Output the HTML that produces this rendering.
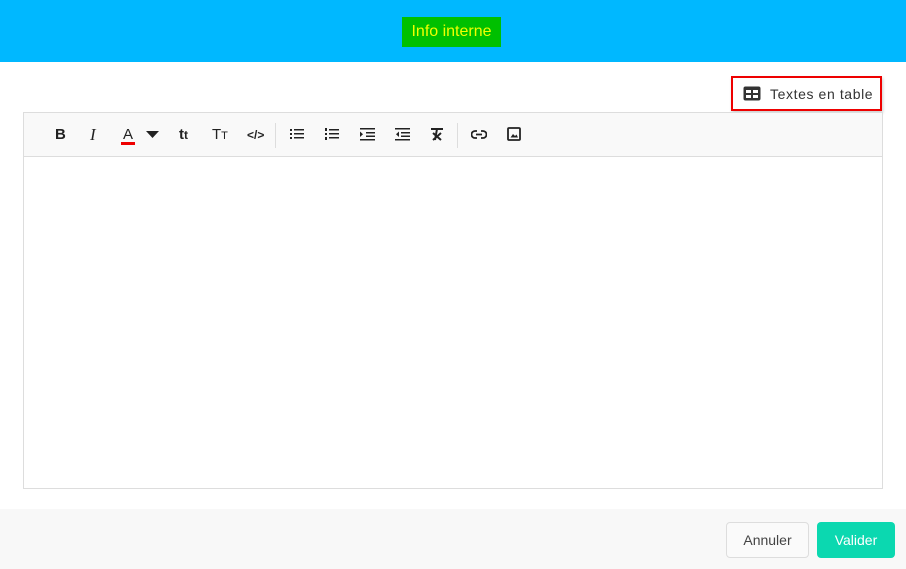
<!DOCTYPE html>
<html><head><meta charset="utf-8"><style>
*{box-sizing:border-box;margin:0;padding:0}
body{width:906px;height:569px;position:relative;background:#fff;font-family:"Liberation Sans",sans-serif;overflow:hidden}
.hdr{position:absolute;left:0;top:0;width:906px;height:62px;background:#00b8ff}
.title{position:absolute;left:402px;top:17px;width:99px;height:30px;background:#00c000;color:#f0ff00;font-size:16px;line-height:30px;text-align:center}
.tbtn{position:absolute;left:731px;top:76px;width:151px;height:35px;border:2px solid #e00;box-shadow:1px 2px 3px rgba(0,0,0,.2);font-size:14px;letter-spacing:0.6px;color:#333;line-height:33px;padding-left:37px;background:#fff}
.tbtn svg{position:absolute;left:10px;top:8px}
.ed{position:absolute;left:23px;top:112px;width:860px;height:377px;border:1px solid #ddd}
.tb{height:44px;background:#f9f9f9;border-bottom:1px solid #ddd;position:relative}
.tb .i{position:absolute;top:0;height:44px;line-height:44px;font-size:15px;color:#222;text-align:center}
.sep{position:absolute;top:10px;width:1px;height:25px;background:#ddd}
.ft{position:absolute;left:0;top:509px;width:906px;height:60px;background:#f8f8f8}
.b{position:absolute;top:522px;height:36px;border-radius:4px;font-size:14px;line-height:37px;text-align:center}
</style></head><body>
<div class="hdr"><div class="title">Info interne</div></div>
<div class="tbtn"><svg width="18" height="15" viewBox="0 0 18 15"><rect x="0.5" y="0.5" width="17" height="14" rx="2" fill="#333"/><rect x="3" y="4" width="5" height="3" fill="#fff"/><rect x="10" y="4" width="5" height="3" fill="#fff"/><rect x="3" y="9" width="5" height="3" fill="#fff"/><rect x="10" y="9" width="5" height="3" fill="#fff"/></svg>Textes en table</div>
<div class="ed"><div class="tb">
<div class="i" style="left:31px;font-weight:bold">B</div>
<div class="i" style="left:66px;font-style:italic;font-family:'Liberation Serif',serif;font-size:17px">I</div>
<div class="i" style="left:99px">A<div style="position:absolute;left:-2px;top:29px;width:14px;height:2.5px;background:#e00"></div></div>
<svg style="position:absolute;left:122px;top:18px" width="13" height="8"><path d="M0 0H13L6.5 7Z" fill="#222"/></svg>
<div class="i" style="left:155px;font-size:15px;font-weight:bold">t<span style="font-size:12px">t</span></div>
<div class="i" style="left:188px;font-size:15px">T<span style="font-size:11px">T</span></div>
<div class="i" style="left:223px;font-size:12px;font-weight:bold">&lt;/&gt;</div>
<div class="sep" style="left:251px"></div>
<svg style="position:absolute;left:266px;top:15px" width="14" height="12"><g fill="#222"><rect x="0" y="1" width="2" height="2"/><rect x="0" y="5" width="2" height="2"/><rect x="0" y="9" width="2" height="2"/><rect x="4" y="1" width="10" height="1.5"/><rect x="4" y="5" width="10" height="1.5"/><rect x="4" y="9" width="10" height="1.5"/></g></svg>
<svg style="position:absolute;left:301px;top:15px" width="14" height="12"><g fill="#222"><rect x="0" y="0" width="2" height="3"/><rect x="0" y="5" width="2" height="2"/><rect x="0" y="9" width="2" height="3"/><rect x="4" y="1" width="10" height="1.5"/><rect x="4" y="5" width="10" height="1.5"/><rect x="4" y="9" width="10" height="1.5"/></g></svg>
<svg style="position:absolute;left:336px;top:15px" width="15" height="13"><g fill="#222"><rect x="0" y="0" width="15" height="1.5"/><rect x="6" y="4" width="9" height="1.5"/><rect x="6" y="7.5" width="9" height="1.5"/><rect x="0" y="11" width="15" height="1.5"/><path d="M0 3.5L3 6.2L0 9z"/></g></svg>
<svg style="position:absolute;left:371px;top:15px" width="15" height="13"><g fill="#222"><rect x="0" y="0" width="15" height="1.5"/><rect x="6" y="4" width="9" height="1.5"/><rect x="6" y="7.5" width="9" height="1.5"/><rect x="0" y="11" width="15" height="1.5"/><path d="M4 3.5L1 6.2L4 9z"/></g></svg>
<svg style="position:absolute;left:406px;top:15px" width="14" height="13"><g stroke="#222" stroke-width="2" fill="none"><path d="M1 1H13M7 1L5 12M3 5L11 12M11 5L3 12"/></g></svg>
<div class="sep" style="left:433px"></div>
<svg style="position:absolute;left:447px;top:17px" width="16" height="9"><g stroke="#222" stroke-width="1.8" fill="none"><path d="M6 1H4A3.5 3.5 0 0 0 4 8H6M10 1H12A3.5 3.5 0 0 1 12 8H10M5 4.5H11"/></g></svg>
<svg style="position:absolute;left:483px;top:14px" width="14" height="14"><rect x="1" y="1" width="12" height="12" rx="1" fill="none" stroke="#222" stroke-width="1.8"/><path d="M3.5 10.5L6 7L8 9L9.5 7.5L11 10.5Z" fill="#222"/></svg>
</div></div>
<div class="ft"></div>
<div class="b" style="left:726px;width:83px;border:1px solid #ddd;background:#fafafa;color:#444;line-height:35px">Annuler</div>
<div class="b" style="left:817px;width:78px;background:#0bd8b0;color:#fff">Valider</div>
</body></html>
